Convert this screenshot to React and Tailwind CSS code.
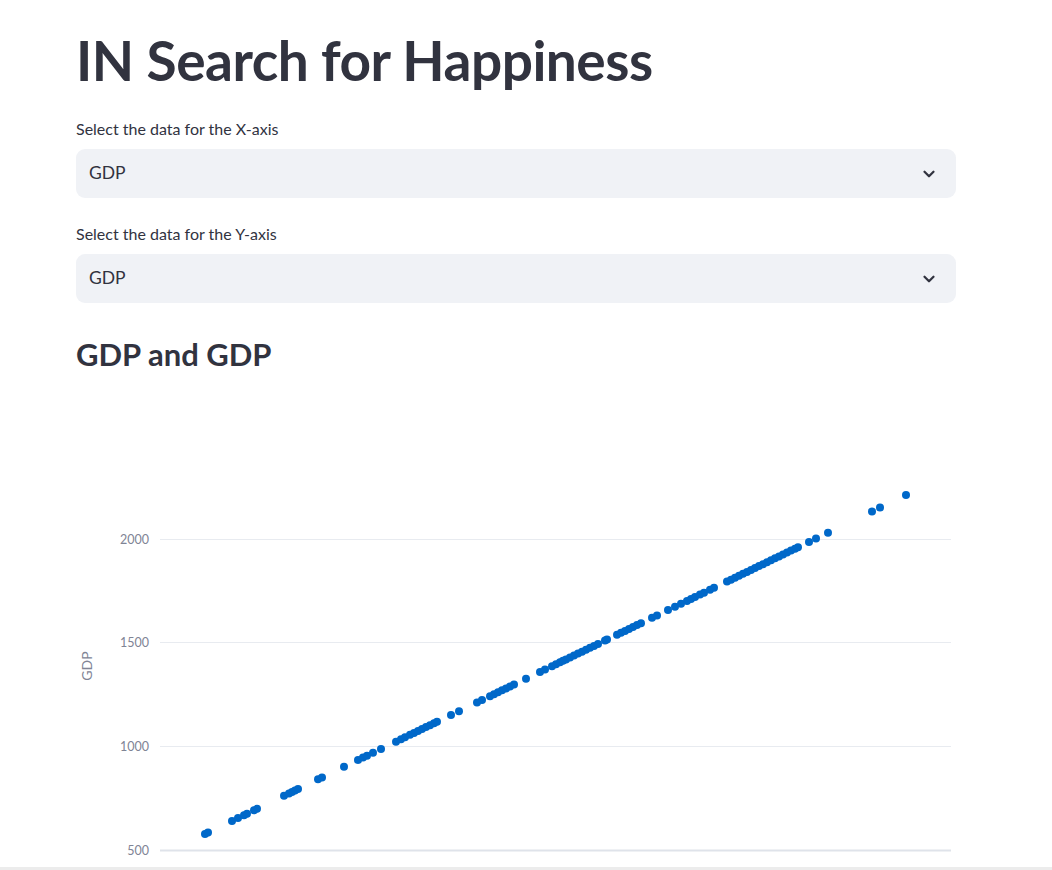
import { ChevronDown } from 'lucide-react';

const FONT = { fontFamily: 'Lato, "Noto Sans", sans-serif' };

// pixel x positions of points read off the chart, y follows the line
const XS = [
  205, 208, 232, 238, 244, 247, 254, 257, 284, 289, 292, 295, 298, 318, 322, 344, 358, 363, 367,
  373, 381, 396, 401, 405, 410, 414, 418, 422, 426, 430, 434, 437, 451, 459, 477, 482, 490, 494,
  498, 502, 506, 510, 514, 526, 540, 545, 552, 556, 560, 563, 566, 570, 574, 578, 582, 586, 590,
  594, 598, 605, 607, 617, 621, 625, 629, 633, 637, 641, 652, 657, 668, 675, 681, 687, 691, 695,
  700, 704, 710, 714, 727, 731, 735, 739, 743, 747, 751, 755, 759, 763, 767, 771, 775, 779, 783,
  787, 791, 795, 798, 809, 816, 828, 872, 880, 906,
];

function SelectBox({ label, value }) {
  return (
    <div className="flex flex-col">
      <label className="text-[16px] text-[#31333f] leading-5 mb-[10px]">{label}</label>
      <div className="h-[49px] rounded-[9px] bg-[#f0f2f6] flex items-center justify-between pl-[13px] pr-[18px]">
        <span className="text-[17.5px] text-[#31333f]">{value}</span>
        <ChevronDown className="w-[18px] h-[18px] text-[#31333f]" strokeWidth={3} />
      </div>
    </div>
  );
}

function Chart() {
  // svg origin at page x=76, y=409
  const ox = 76;
  const oy = 409;
  const ticks = [
    { v: 2000, y: 538 },
    { v: 1500, y: 641 },
    { v: 1000, y: 745 },
    { v: 500, y: 849 },
  ];
  return (
    <svg width="880" height="457" className="block">
      {ticks.map((t) => (
        <g key={t.v}>
          <line
            x1={160 - ox}
            x2={951 - ox}
            y1={t.y - oy + 0.5}
            y2={t.y - oy + 0.5}
            stroke={t.v === 500 ? '#dfe3ea' : '#e8ebf0'}
            strokeWidth={t.v === 500 ? 2 : 1}
          />
          <text
            x={149 - ox}
            y={t.y - oy + 4.5}
            textAnchor="end"
            fontSize="12.5"
            fill="#808495"
            style={FONT}
          >
            {t.v}
          </text>
        </g>
      ))}
      <text
        transform={`translate(${92 - ox}, ${665 - oy}) rotate(-90)`}
        textAnchor="middle"
        fontSize="14"
        fill="#808495"
        style={FONT}
      >
        GDP
      </text>
      {XS.map((x, i) => (
        <circle key={i} cx={x - ox} cy={833 - (x - 205) * 0.4836 - oy} r="4" fill="#0068c9" />
      ))}
    </svg>
  );
}

export default function App() {
  return (
    <div className="h-[870px] bg-white flex flex-col overflow-hidden" style={FONT}>
      <div className="w-[880px] ml-[76px] flex flex-col">
        <h1 className="text-[55px] font-bold text-[#31333f] leading-none mt-[33px] tracking-[-0.5px]">
          IN Search for Happiness
        </h1>
        <div className="mt-[31px] flex flex-col gap-[26px]">
          <SelectBox label="Select the data for the X-axis" value="GDP" />
          <SelectBox label="Select the data for the Y-axis" value="GDP" />
        </div>
        <h2 className="text-[31px] font-bold text-[#31333f] leading-none mt-[36px]">GDP and GDP</h2>
        <div className="mt-[40px]">
          <Chart />
        </div>
      </div>
      <div className="flex-1" />
      <div className="h-[4px] bg-[#ececec] shrink-0" />
    </div>
  );
}
